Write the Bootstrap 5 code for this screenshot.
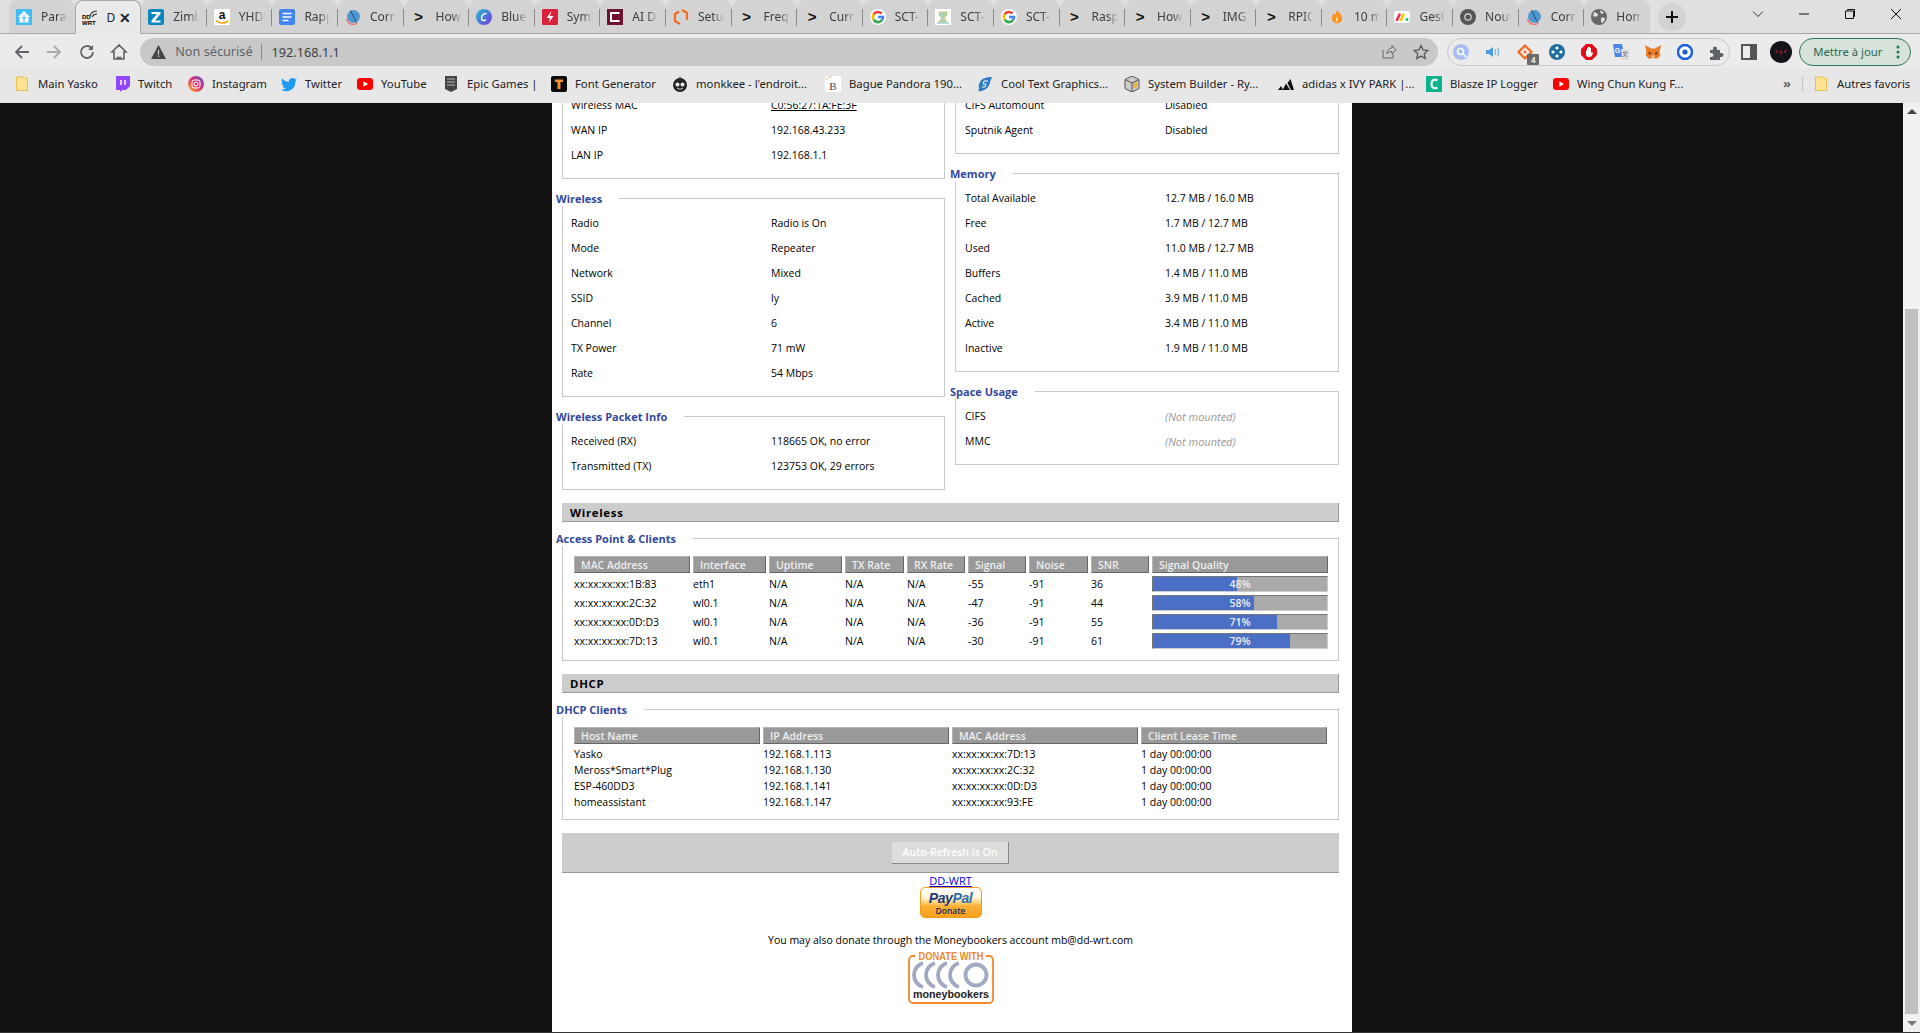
<!DOCTYPE html>
<html lang="fr">
<head>
<meta charset="utf-8">
<title>DD-WRT</title>
<link href="https://cdn.jsdelivr.net/npm/bootstrap@5.3.0/dist/css/bootstrap.min.css" rel="stylesheet">
<style>
html,body{height:100%;}
body{background:#111;font-family:"Noto Sans",sans-serif;border-bottom:1px solid #333;}
.tabstrip{height:33px;background:#e0e0e0;padding-left:9px;border-bottom:1px solid #a9a9a9;flex:none;box-sizing:content-box;}
.tabrow{width:1641px;}
.gtab{flex:1 1 0;min-width:0;height:33px;background:#d3d3d3;border-radius:8px 8px 0 0;padding-left:7px;font-size:12px;color:#3c4043;position:relative;}
.gtab.sep::after{content:"";position:absolute;right:0;top:9px;height:17px;width:1px;background:#8a8a8a;}
.gtab.act{background:#e9e9e9;border:1px solid #a9a9a9;border-bottom:0;height:34px;padding-left:6px;z-index:2;color:#222;}
.fav{width:16px;height:16px;flex:none;display:block;}
.ttl{margin-left:9px;width:26px;white-space:nowrap;overflow:hidden;-webkit-mask-image:linear-gradient(90deg,#000 60%,transparent);mask-image:linear-gradient(90deg,#000 60%,transparent);}
.act .ttl{margin-left:9px;width:11px;-webkit-mask-image:none;mask-image:none;}
.chev{width:16px;height:16px;flex:none;font-weight:700;font-size:15px;line-height:16px;color:#111;text-align:center;font-family:"Liberation Sans",sans-serif;}
.tabx{margin-left:auto;margin-right:9px;font-size:14px;font-weight:700;line-height:1;}
.plus{width:28px;height:28px;border-radius:50%;background:#d3d3d3;margin-left:8px;margin-top:3px;flex:none;}
.winctl{width:234px;height:28px;padding-right:18px;padding-left:66px;flex:none;}
.toolbar{height:34px;padding-top:2px;background:#ebebeb;flex:none;padding-left:13px;}
.tb-btn{width:18px;height:18px;flex:none;margin-right:14.3px;display:block;}
.omni{width:1298px;height:28px;background:#c8c8c8;border-radius:14px;font-size:12.7px;color:#5f6368;margin-left:-2px;padding-left:11px;padding-right:9px;flex:none;}
.omni .url{color:#3c4043;margin-left:8px;border-left:1px solid #888;padding-left:10px;line-height:16px;}
.omni .nonsec{margin-left:9px;}
.extpill{width:283px;height:28px;border:1px solid #c9c9c9;border-radius:14px;margin-left:9px;padding:0 4px 0 5px;background:#ebebeb;position:relative;flex:none;}
.xbadge{position:absolute;left:79px;top:15px;width:12px;height:11px;background:#6b6b6b;color:#eee;font-size:8px;line-height:11px;text-align:center;border-radius:1px;font-weight:700;}
.sidep{margin-left:11px;}
.avatar{margin-left:13px;width:22px;height:22px;flex:none;}
.updpill{width:112px;height:28px;margin-left:7px;border:1px solid #2a7a50;border-radius:14px;background:#d6e2da;color:#2a6a50;font-size:11.3px;padding-left:13px;padding-right:10px;flex:none;}
.bmbar{height:35px;padding-bottom:3px;background:#e7e7e7;flex:none;display:grid;grid-template-columns:100px 74px 93px 76px 86px 108px 121px 153px 152px 147px 154px 148px 127px 230px 19px 11px auto;padding-left:14px;align-items:center;font-size:11.3px;color:#222;}
.bmk{display:flex;align-items:center;gap:0;white-space:nowrap;}
.bmk svg{width:16px;height:16px;flex:none;margin-right:8px;}
.bmsep{border-left:1px solid #c4c4c4;height:16px;width:1px;}
.more{font-size:13px;font-weight:700;color:#666;}
.vp{min-height:0;flex:1 1 0;}
.canvasbg{flex:1 1 0;min-width:0;}
.ddpage{width:800px;background:#fff;overflow:hidden;margin-left:552px;padding:0 13px 0 10px;font-family:"Open Sans",sans-serif;font-size:10.5px;color:#000;}
.vscroll{width:17px;background:#f1f1f1;flex:none;position:relative;}
.vthumb{position:absolute;left:2px;right:2px;top:206px;bottom:18px;background:#c0c0c0;}
.arrup,.arrdn{position:absolute;left:4px;width:0;height:0;border-left:5px solid transparent;border-right:5px solid transparent;}
.arrup{top:6px;border-bottom:5px solid #444;}
.arrdn{bottom:6px;border-top:5px solid #777;}
.cols{margin-top:-10px;}
.colL{width:383px;}
.colR{width:384px;}
.fbox{position:relative;border:1px solid #c8c8c8;margin:0 0 19px;padding:12px 8px 10px 8px;min-width:0;}
.colL .fbox:last-child{margin-bottom:0;}
.fbox.cut{border-top:0;padding-top:0;}
.colR .fbox{padding-left:9px;}
.fbox>legend{position:absolute;float:none;width:auto;left:-7px;top:-7px;margin:0;padding:0 17px 0 0;background:#fff;color:#33489c;font-size:11px;line-height:14px;font-weight:700;font-family:"Open Sans",sans-serif;}
.colR .fbox>legend{left:-6px;}
.kv{display:flex;height:25px;align-items:center;line-height:25px;}
.kv>span:first-child{width:200px;flex:none;}
.valu{text-decoration:underline;}
.nm{font-style:italic;color:#999;font-size:11px;line-height:24px;}
.secbar{height:19px;background:#ccc;border-bottom:1px solid #999;border-right:1px solid #999;font-weight:700;font-size:11.4px;letter-spacing:.7px;line-height:20px;padding-left:8px;color:#000;margin-top:13px;}
.fbox.tbx{margin-top:16px;margin-bottom:0;padding:17px 8px 11px 8px;}
.fbox.tbx.dh{padding-bottom:8px;}
.dtab{border-collapse:separate;border-spacing:3px 0;table-layout:fixed;width:760px;}
.dtab th{height:17px;background:#999;color:#eee;font-weight:600;padding:0 0 0 6px;border-top:1px solid #b5b5b5;border-left:1px solid #b5b5b5;border-bottom:1px solid #666;border-right:1px solid #666;line-height:14px;white-space:nowrap;font-size:10.5px;}
.dtab td{padding:0;white-space:nowrap;}
.aptab td{height:19px;padding-top:3px;line-height:16px;}
.dhtab td{height:16px;}
.dhtab tbody tr:first-child td{height:19px;padding-top:3px;}
.c-mac{width:116px;}.c-if{width:73px;}.c-up{width:73px;}.c-tx{width:59px;}.c-rx{width:58px;}.c-sg{width:58px;}.c-no{width:59px;}.c-sn{width:58px;}.c-sq{width:176px;}
.c-dh{width:186px;}
.dhtab{width:759px;}
.qmeter{height:16px;background:#aaa;position:relative;border-top:1px solid #777;border-left:1px solid #777;border-bottom:1px solid #ccc;border-right:1px solid #ccc;color:#eee;text-align:center;line-height:14px;font-weight:600;}
.qfill{position:absolute;left:0;top:0;bottom:0;background:#4a6fc5;}
.qtxt{position:relative;}
.btnbar{height:40px;background:#ccc;border-bottom:1px solid #999;margin-top:13px;padding-top:1px;}
.arbtn{width:117px;height:22px;background:#ddd;color:#fff;border:0;border-bottom:1px solid #888;border-right:1px solid #888;font-weight:600;font-size:10.5px;padding:0;font-family:"Open Sans",sans-serif;}
.foot{height:159px;line-height:13px;padding-top:1px;}
.foot a{color:#00e;font-size:11px;line-height:13px;display:block;}
.ppbtn{width:62px;height:31px;border:1px solid #f59a1a;border-radius:5px;background:linear-gradient(#fff 0,#fff2d6 35%,#ffd27a 50%,#fbb035 62%,#f8a01c 100%);line-height:1;flex:none;}
.ppname{font:italic 700 14px "Liberation Sans",sans-serif;color:#1c3b78;margin-top:2px;letter-spacing:-.4px;}
.ppname b{color:#2f6fb5;}
.ppdon{font-size:8.5px;color:#12275e;margin-top:1px;font-weight:600;}
.donate{margin-top:16px;height:13px;}
.mbk{width:86px;height:52px;display:block;margin-top:5px;flex:none;}
</style>
</head>
<body class="d-flex flex-column overflow-hidden">
<svg width="0" height="0" class="position-absolute">
<defs>
<symbol id="g" viewBox="0 0 16 16"><circle cx="8" cy="8" r="8" fill="#fff"/><g fill="none" stroke-width="2.600"><path d="M3.700 5.200A5 5 0 0 1 11.500 4.500" stroke="#ea4335"/><path d="M3.700 5.200A5 5 0 0 0 3.700 10.800" stroke="#fbbc05"/><path d="M3.700 10.800A5 5 0 0 0 12 11" stroke="#34a853"/><path d="M12 11A5 5 0 0 0 13 8H8" stroke="#4285f4"/></g></symbol>
<symbol id="ball" viewBox="0 0 16 16"><path d="M1.500 10a7 7 0 0 0 11 4" fill="none" stroke="#e87a7a" stroke-width="1.500"/><circle cx="8.500" cy="7.500" r="6.500" fill="#4e97cf"/><path d="M5.500 1.500l6 12" stroke="#1f4e79" stroke-width="1"/></symbol>
<symbol id="folder" viewBox="0 0 16 16"><path d="M2.500 1h7l1 1h3v12.500h-11z" fill="#fde293" stroke="#e8c04f"/></symbol>
<symbol id="yt" viewBox="0 0 16 16"><rect y="2" width="16" height="12" rx="3" fill="#f00"/><path d="M6.400 5.300 11 8l-4.600 2.700z" fill="#fff"/></symbol>
</defs>
</svg>

<div class="tabstrip d-flex">
<div class="tabrow d-flex">
<div class="gtab d-flex align-items-center"><svg class="fav" viewBox="0 0 16 16"><rect width="16" height="16" rx="1" fill="#41bdf5"/><path d="M8 2l6 6h-1.500v5.500h-9V8H2z" fill="#fff"/><path d="M8 6v7M6 8l2 2 2-2" stroke="#41bdf5" fill="none"/></svg><span class="ttl">Para</span></div>
<div class="gtab act d-flex align-items-center"><svg class="fav" viewBox="0 0 16 16"><text x="0" y="9" font-family="Liberation Sans" font-weight="700" font-size="6">DD</text><text x="0" y="15" font-family="Liberation Sans" font-weight="700" font-size="6">WRT</text><path d="M8 6c1-3 3-5 7-5M10 7c1-2 2-3 5-3" stroke="#333" fill="none" stroke-width="1.200"/></svg><span class="ttl">D</span><span class="tabx">✕</span></div>
<div class="gtab sep d-flex align-items-center"><svg class="fav" viewBox="0 0 16 16"><rect width="16" height="16" rx="2" fill="#0a85c0"/><path d="M3.500 3h9v2L7 11.500h5.500V13.500h-9v-2L9 5H3.500z" fill="#fff"/></svg><span class="ttl">Zimb</span></div>
<div class="gtab sep d-flex align-items-center"><svg class="fav" viewBox="0 0 16 16"><rect width="16" height="16" rx="1" fill="#fff"/><text x="8" y="10" text-anchor="middle" font-family="Liberation Sans" font-weight="700" font-size="12" fill="#111">a</text><path d="M1.500 11.500c4 3 9 3 13 .5" stroke="#f90" stroke-width="1.500" fill="none"/></svg><span class="ttl">YHD(</span></div>
<div class="gtab sep d-flex align-items-center"><svg class="fav" viewBox="0 0 16 16"><rect width="16" height="16" rx="2" fill="#4285f4"/><path d="M3.500 4.500h9M3.500 8h9M3.500 11.500h6" stroke="#fff" stroke-width="1.600"/></svg><span class="ttl">Rapp</span></div>
<div class="gtab sep d-flex align-items-center"><svg class="fav"><use href="#ball"/></svg><span class="ttl">Corr</span></div>
<div class="gtab sep d-flex align-items-center"><span class="chev">&gt;</span><span class="ttl">How</span></div>
<div class="gtab sep d-flex align-items-center"><svg class="fav" viewBox="0 0 16 16"><defs><linearGradient id="cv" x1="0" y1="0" x2="1" y2="1"><stop offset="0" stop-color="#1fc4d8"/><stop offset="1" stop-color="#7a2ee0"/></linearGradient></defs><circle cx="8" cy="8" r="8" fill="url(#cv)"/><path d="M10.500 5c-1-1.500-5 .5-5 4s3 3 4.500 1.500" stroke="#fff" stroke-width="1.500" fill="none"/></svg><span class="ttl">Blue</span></div>
<div class="gtab sep d-flex align-items-center"><svg class="fav" viewBox="0 0 16 16"><rect width="16" height="16" rx="1" fill="#d8213b"/><path d="M9.500 2 4.500 9H8l-1.500 5 5-7H8z" fill="#fff"/></svg><span class="ttl">Symb</span></div>
<div class="gtab sep d-flex align-items-center"><svg class="fav" viewBox="0 0 16 16"><rect width="16" height="16" fill="#6f1230"/><path d="M12.500 4H4v8h8.500" stroke="#fff" stroke-width="2" fill="none"/></svg><span class="ttl">AI De</span></div>
<div class="gtab sep d-flex align-items-center"><svg class="fav" viewBox="0 0 16 16"><path d="M9 1l5 2.800v7M7 15l-5-2.800V5l4-2.300" stroke="#f26a21" stroke-width="2.200" fill="none"/></svg><span class="ttl">Setup</span></div>
<div class="gtab sep d-flex align-items-center"><span class="chev">&gt;</span><span class="ttl">Freq</span></div>
<div class="gtab sep d-flex align-items-center"><span class="chev">&gt;</span><span class="ttl">Curr</span></div>
<div class="gtab sep d-flex align-items-center"><svg class="fav"><use href="#g"/></svg><span class="ttl">SCT-</span></div>
<div class="gtab sep d-flex align-items-center"><svg class="fav" viewBox="0 0 16 16"><rect width="16" height="16" fill="#fff"/><path d="M4 3h8v3l-3 3 3 4H4l3-4-3-3z" fill="#a8d5ba" stroke="#d9b84a" stroke-width=".7"/><path d="M2 14h12" stroke="#6fb7c9"/></svg><span class="ttl">SCT-</span></div>
<div class="gtab sep d-flex align-items-center"><svg class="fav"><use href="#g"/></svg><span class="ttl">SCT-</span></div>
<div class="gtab sep d-flex align-items-center"><span class="chev">&gt;</span><span class="ttl">Rasp</span></div>
<div class="gtab sep d-flex align-items-center"><span class="chev">&gt;</span><span class="ttl">How</span></div>
<div class="gtab sep d-flex align-items-center"><span class="chev">&gt;</span><span class="ttl">IMG_</span></div>
<div class="gtab sep d-flex align-items-center"><span class="chev">&gt;</span><span class="ttl">RPIC</span></div>
<div class="gtab sep d-flex align-items-center"><svg class="fav" viewBox="0 0 16 16"><path d="M8 1c1 2 5 4 5 8.500A5 5 0 0 1 3 9.500C3 7 4 6 5 4c.5 1 1 1.500 1.500 2C7 4 7.500 3 8 1z" fill="#f5921e"/><path d="M8 7c0 2-2 3-1 6 2 .5 3-2 1-6z" fill="#fddb92"/></svg><span class="ttl">10 m</span></div>
<div class="gtab sep d-flex align-items-center"><svg class="fav" viewBox="0 0 16 16"><rect y="2" width="16" height="12" rx="3" fill="#fff"/><path d="M3 11l2.500-5.500" stroke="#f62b54" stroke-width="2.600" stroke-linecap="round"/><path d="M7 11l2.500-5.500" stroke="#fc0" stroke-width="2.600" stroke-linecap="round"/><circle cx="13" cy="10.500" r="1.500" fill="#00ca72"/></svg><span class="ttl">Gest</span></div>
<div class="gtab sep d-flex align-items-center"><svg class="fav" viewBox="0 0 16 16"><circle cx="8" cy="8" r="8" fill="#555"/><circle cx="8" cy="8" r="3.800" fill="#ddd"/><circle cx="8" cy="8" r="2.600" fill="#555"/></svg><span class="ttl">Nouv</span></div>
<div class="gtab sep d-flex align-items-center"><svg class="fav"><use href="#ball"/></svg><span class="ttl">Corr</span></div>
<div class="gtab d-flex align-items-center"><svg class="fav" viewBox="0 0 16 16"><circle cx="8" cy="8" r="8" fill="#666"/><path d="M3 3c2 1 4 1 4 3S3 8 2 7M10 9c2-1 4 0 4 1s-2 4-3 4-1-3-1-5zM9 1c1 1 3 1 4 3L10 5z" fill="#ddd"/></svg><span class="ttl">Hom</span></div>
</div>
<div class="plus d-flex align-items-center justify-content-center"><svg width="14" height="14" viewBox="0 0 14 14"><path d="M7 1v12M1 7h12" stroke="#111" stroke-width="2"/></svg></div>
<div class="winctl d-flex align-items-center justify-content-between">
<svg width="12" height="12" viewBox="0 0 12 12"><path d="M1 3.500l5 5 5-5" stroke="#333" fill="none"/></svg>
<svg width="12" height="12" viewBox="0 0 12 12"><path d="M1 6h10" stroke="#111"/></svg>
<svg width="12" height="12" viewBox="0 0 12 12"><path d="M3.500 2.500V1.500h7v7h-1M1.500 3h8v7.500h-8z" stroke="#111" fill="none"/></svg>
<svg width="12" height="12" viewBox="0 0 12 12"><path d="M1 1l10 10M11 1L1 11" stroke="#111"/></svg>
</div>
</div>

<div class="toolbar d-flex align-items-center">
<svg class="tb-btn" viewBox="0 0 18 18"><path d="M16 9H3M9 3 3 9l6 6" stroke="#5f6368" stroke-width="1.800" fill="none"/></svg>
<svg class="tb-btn" viewBox="0 0 18 18"><path d="M2 9h13M9 3l6 6-6 6" stroke="#aaa" stroke-width="1.800" fill="none"/></svg>
<svg class="tb-btn" viewBox="0 0 18 18"><path d="M15 9a6 6 0 1 1-1.800-4.300" stroke="#5f6368" stroke-width="1.800" fill="none"/><path d="M15 2v5h-5z" fill="#5f6368"/></svg>
<svg class="tb-btn" viewBox="0 0 18 18"><path d="M9 2 2 9h2v7h10V9h2zM6.500 14.500h5" stroke="#5f6368" stroke-width="1.600" fill="none"/></svg>
<div class="omni d-flex align-items-center">
<svg width="15" height="14" viewBox="0 0 15 14"><path d="M7.500 0 15 14H0z" fill="#444"/><path d="M7.500 5v4.500M7.500 10.500v1.500" stroke="#c8c8c8" stroke-width="1.300"/></svg>
<span class="nonsec">Non sécurisé</span><span class="url">192.168.1.1</span>
<svg class="ms-auto me-3" width="16" height="16" viewBox="0 0 16 16"><path d="M2 6v8h10v-4M6 10c0-4 3-6 5-6V1.500L15 6l-4 4V7.500C9 7.500 7 8 6 10z" stroke="#666" fill="none"/></svg>
<svg width="16" height="16" viewBox="0 0 16 16"><path d="M8 1.500l2 4.500 4.800.5-3.600 3.200 1 4.800L8 12.100l-4.200 2.400 1-4.800L1.200 6.500 6 6z" stroke="#555" stroke-width="1.300" fill="none"/></svg>
</div>
<div class="extpill d-flex align-items-center justify-content-between">
<svg class="fav" viewBox="0 0 16 16"><circle cx="8" cy="8" r="8" fill="#a9bdf5"/><circle cx="7.500" cy="7.500" r="3" fill="none" stroke="#fff" stroke-width="1.600"/><path d="M10 10l3 3" stroke="#fff" stroke-width="1.600"/></svg>
<svg class="fav" viewBox="0 0 16 16"><path d="M1 6h3l4-3v10L4 10H1z" fill="#4d9be0"/><path d="M10 5c1 2 1 4 0 6M12.500 3.500c1.500 3 1.500 6 0 9" stroke="#7bb6ea" fill="none" stroke-width="1.300"/></svg>
<svg class="fav" viewBox="0 0 16 16"><path d="M8 1.500 14.500 8 8 14.500 1.500 8z" fill="none" stroke="#f26a21" stroke-width="2.400" stroke-linejoin="round"/><circle cx="8" cy="8" r="1.400" fill="#f26a21"/></svg>
<svg class="fav" viewBox="0 0 16 16"><circle cx="8" cy="8" r="8" fill="#1f6e9c"/><circle cx="8" cy="4" r="1.600" fill="#fff"/><circle cx="8" cy="12" r="1.600" fill="#fff"/><circle cx="4" cy="8" r="1.600" fill="#fff"/><circle cx="12" cy="8" r="1.600" fill="#fff"/></svg>
<svg class="fav" viewBox="0 0 16 16"><path d="M5 0h6l5 5v6l-5 5H5l-5-5V5z" fill="#e0101b"/><path d="M5 6v4c0 2 1 3 3 3s3-1 4-4l-1-1-1 1V4H9v3V3H8v4V3H7v4V4H6v3z" fill="#fff"/></svg>
<svg class="fav" viewBox="0 0 16 16"><path d="M0 0h9l3 13H2z" fill="#4a86e8"/><text x="4.500" y="9" font-size="7" font-weight="700" fill="#fff" text-anchor="middle" font-family="Liberation Sans">G</text><path d="M8 5h8v11H9z" fill="#ddd"/><text x="12" y="12" font-size="6" fill="#666" text-anchor="middle" font-family="Noto Sans CJK SC">文</text></svg>
<svg class="fav" viewBox="0 0 16 16"><path d="M0 1l6 3.500h4L16 1l-1.500 7 1 3-3 3.500H9.500L8 13l-1.500 1.500H3.500L.5 11l1-3z" fill="#ea7a26"/><path d="M3 8l3 1-1 2zM13 8l-3 1 1 2z" fill="#3a2a22"/><path d="M6 13h4l-2-2z" fill="#f6d7b8"/></svg>
<svg class="fav" viewBox="0 0 16 16"><circle cx="8" cy="8" r="7" fill="#fff" stroke="#1a5fe0" stroke-width="2.400"/><circle cx="8" cy="8" r="2.600" fill="#1a5fe0"/></svg>
<svg class="fav" viewBox="0 0 16 16"><path d="M1 6h3V4.500a2 2 0 0 1 4 0V6h3v3h1.500a2 2 0 0 1 0 4H11v3H1v-3h1.500a2 2 0 0 0 0-4H1z" fill="#5f6368"/></svg>
<span class="xbadge">4</span>
</div>
<svg class="fav sidep" viewBox="0 0 16 16"><rect x="1" y="1" width="14" height="14" fill="none" stroke="#555" stroke-width="2"/><rect x="9" y="1" width="6" height="14" fill="#555"/></svg>
<svg class="avatar" viewBox="0 0 22 22"><circle cx="11" cy="11" r="11" fill="#15121a"/><path d="M11 8l1 3-1 4-1-4zM5 8l4 3-3 1zM17 8l-4 3 3 1z" fill="#8c1c28"/></svg>
<div class="updpill d-flex align-items-center justify-content-between"><span>Mettre à jour</span><svg width="4" height="14" viewBox="0 0 4 14"><circle cx="2" cy="2" r="1.500" fill="#1e7a48"/><circle cx="2" cy="7" r="1.500" fill="#1e7a48"/><circle cx="2" cy="12" r="1.500" fill="#1e7a48"/></svg></div>
</div>

<div class="bmbar">
<span class="bmk"><svg><use href="#folder"/></svg>Main Yasko</span>
<span class="bmk"><svg viewBox="0 0 16 16"><path d="M2 0h14v10l-4 4H8.500L6 16v-2H2z" fill="#9146ff"/><path d="M7 4v5M11 4v5" stroke="#fff" stroke-width="1.500"/></svg>Twitch</span>
<span class="bmk"><svg viewBox="0 0 16 16"><defs><linearGradient id="ig" x1="0" y1="1" x2="1" y2="0"><stop offset="0" stop-color="#fdc830"/><stop offset=".5" stop-color="#e1306c"/><stop offset="1" stop-color="#5b51d8"/></linearGradient></defs><circle cx="8" cy="8" r="8" fill="url(#ig)"/><rect x="4" y="4" width="8" height="8" rx="2" fill="none" stroke="#fff"/><circle cx="8" cy="8" r="2" fill="none" stroke="#fff"/></svg>Instagram</span>
<span class="bmk"><svg viewBox="0 0 16 16"><path d="M16 3.500c-.6.300-1.200.4-1.900.5.700-.4 1.200-1 1.400-1.800-.6.400-1.300.6-2 .8a3.300 3.300 0 0 0-5.600 3C5.200 5.900 2.800 4.600 1.100 2.600.2 4.100.7 6 2.100 7c-.5 0-1-.2-1.500-.4 0 1.600 1.100 3 2.600 3.300-.5.100-1 .2-1.500.1.400 1.300 1.600 2.200 3 2.300A6.600 6.600 0 0 1 0 13.600a9.300 9.300 0 0 0 14.400-8.300c.6-.5 1.200-1.100 1.600-1.800z" fill="#1d9bf0"/></svg>Twitter</span>
<span class="bmk"><svg><use href="#yt"/></svg>YouTube</span>
<span class="bmk"><svg viewBox="0 0 16 16"><path d="M2 0h12v13l-6 3-6-3z" fill="#444"/><path d="M4 3h8M4 6h8M4 9h8" stroke="#bbb"/></svg>Epic Games |</span>
<span class="bmk"><svg viewBox="0 0 16 16"><rect width="16" height="16" rx="2" fill="#0a0a0a"/><path d="M4 3.500h8v2.500H9.500v7h-3V6H4z" fill="#f5922a"/></svg>Font Generator</span>
<span class="bmk"><svg viewBox="0 0 16 16"><circle cx="8" cy="9" r="7" fill="#222"/><path d="M8 0l1 3H7z" fill="#222"/><circle cx="5.500" cy="8.500" r="2" fill="#eee"/><circle cx="10.500" cy="8.500" r="2" fill="#eee"/><path d="M5 12c2 1.500 4 1.500 6 0" stroke="#eee"/></svg>monkkee - l'endroit...</span>
<span class="bmk"><svg viewBox="0 0 16 16"><rect width="16" height="16" fill="#fff"/><path d="M1 4c2-3 4-3 6-4" stroke="#d8c98c" fill="none"/><text x="8" y="14" font-size="11" text-anchor="middle" font-family="Liberation Serif" fill="#445">B</text></svg>Bague Pandora 190...</span>
<span class="bmk"><svg viewBox="0 0 16 16"><path d="M3 6c1-3 6-5 12-5l-2 5c0 5-6 10-12 9 1-1 1-2 1-3-1-2 0-4 1-6z" fill="#2f7cc2"/><path d="M11 5H7L6 8h3l-1 3H5" stroke="#fff" fill="none"/></svg>Cool Text Graphics...</span>
<span class="bmk"><svg viewBox="0 0 16 16"><path d="M8 0l7 3.500v9L8 16l-7-3.500v-9z" fill="#ccc" stroke="#555"/><path d="M8 7v9M1 3.500 8 7l7-3.500" stroke="#555" fill="none"/><path d="M9 8l4-2v5l-4 2z" fill="#e8b33c"/></svg>System Builder - Ry...</span>
<span class="bmk"><svg viewBox="0 0 16 16"><path d="M0 14l3-4 2 4zM4.500 14 8 7.500l4 6.500zM9.500 7l3-4 3.500 11h-3z" fill="#111"/></svg>adidas x IVY PARK |...</span>
<span class="bmk"><svg viewBox="0 0 16 16"><rect width="16" height="16" fill="#0bb38c"/><path d="M11.500 4.500c-1-1-6-2-6 3.500s5 4.500 6 3.500" stroke="#fff" stroke-width="2" fill="none"/></svg>Blasze IP Logger</span>
<span class="bmk"><svg><use href="#yt"/></svg>Wing Chun Kung F...</span>
<span class="more">»</span>
<span class="bmsep"></span>
<span class="bmk"><svg><use href="#folder"/></svg>Autres favoris</span>
</div>

<div class="vp d-flex">
<div class="canvasbg overflow-hidden">
<main class="ddpage">
<div class="cols d-flex justify-content-between">
<div class="colL">
<fieldset class="fbox cut">
<div class="kv"><span>Wireless MAC</span><span class="valu">C0:56:27:1A:FE:3F</span></div>
<div class="kv"><span>WAN IP</span><span>192.168.43.233</span></div>
<div class="kv"><span>LAN IP</span><span>192.168.1.1</span></div>
</fieldset>
<fieldset class="fbox"><legend>Wireless</legend>
<div class="kv"><span>Radio</span><span>Radio is On</span></div>
<div class="kv"><span>Mode</span><span>Repeater</span></div>
<div class="kv"><span>Network</span><span>Mixed</span></div>
<div class="kv"><span>SSID</span><span>ly</span></div>
<div class="kv"><span>Channel</span><span>6</span></div>
<div class="kv"><span>TX Power</span><span>71 mW</span></div>
<div class="kv"><span>Rate</span><span>54 Mbps</span></div>
</fieldset>
<fieldset class="fbox"><legend>Wireless Packet Info</legend>
<div class="kv"><span>Received (RX)</span><span>118665 OK, no error</span></div>
<div class="kv"><span>Transmitted (TX)</span><span>123753 OK, 29 errors</span></div>
</fieldset>
</div>
<div class="colR">
<fieldset class="fbox cut">
<div class="kv"><span>CIFS Automount</span><span>Disabled</span></div>
<div class="kv"><span>Sputnik Agent</span><span>Disabled</span></div>
</fieldset>
<fieldset class="fbox"><legend>Memory</legend>
<div class="kv"><span>Total Available</span><span>12.7 MB / 16.0 MB</span></div>
<div class="kv"><span>Free</span><span>1.7 MB / 12.7 MB</span></div>
<div class="kv"><span>Used</span><span>11.0 MB / 12.7 MB</span></div>
<div class="kv"><span>Buffers</span><span>1.4 MB / 11.0 MB</span></div>
<div class="kv"><span>Cached</span><span>3.9 MB / 11.0 MB</span></div>
<div class="kv"><span>Active</span><span>3.4 MB / 11.0 MB</span></div>
<div class="kv"><span>Inactive</span><span>1.9 MB / 11.0 MB</span></div>
</fieldset>
<fieldset class="fbox"><legend>Space Usage</legend>
<div class="kv"><span>CIFS</span><span class="nm">(Not mounted)</span></div>
<div class="kv"><span>MMC</span><span class="nm">(Not mounted)</span></div>
</fieldset>
</div>
</div>

<div class="secbar">Wireless</div>
<fieldset class="fbox tbx"><legend>Access Point &amp; Clients</legend>
<table class="dtab aptab">
<colgroup><col class="c-mac"><col class="c-if"><col class="c-up"><col class="c-tx"><col class="c-rx"><col class="c-sg"><col class="c-no"><col class="c-sn"><col class="c-sq"></colgroup>
<thead><tr><th>MAC Address</th><th>Interface</th><th>Uptime</th><th>TX Rate</th><th>RX Rate</th><th>Signal</th><th>Noise</th><th>SNR</th><th>Signal Quality</th></tr></thead>
<tbody>
<tr><td>xx:xx:xx:xx:1B:83</td><td>eth1</td><td>N/A</td><td>N/A</td><td>N/A</td><td>-55</td><td>-91</td><td>36</td><td><div class="qmeter"><div class="qfill" style="width:48%"></div><span class="qtxt">48%</span></div></td></tr>
<tr><td>xx:xx:xx:xx:2C:32</td><td>wl0.1</td><td>N/A</td><td>N/A</td><td>N/A</td><td>-47</td><td>-91</td><td>44</td><td><div class="qmeter"><div class="qfill" style="width:58%"></div><span class="qtxt">58%</span></div></td></tr>
<tr><td>xx:xx:xx:xx:0D:D3</td><td>wl0.1</td><td>N/A</td><td>N/A</td><td>N/A</td><td>-36</td><td>-91</td><td>55</td><td><div class="qmeter"><div class="qfill" style="width:71%"></div><span class="qtxt">71%</span></div></td></tr>
<tr><td>xx:xx:xx:xx:7D:13</td><td>wl0.1</td><td>N/A</td><td>N/A</td><td>N/A</td><td>-30</td><td>-91</td><td>61</td><td><div class="qmeter"><div class="qfill" style="width:79%"></div><span class="qtxt">79%</span></div></td></tr>
</tbody>
</table>
</fieldset>

<div class="secbar">DHCP</div>
<fieldset class="fbox tbx dh"><legend>DHCP Clients</legend>
<table class="dtab dhtab">
<colgroup><col class="c-dh"><col class="c-dh"><col class="c-dh"><col class="c-dh"></colgroup>
<thead><tr><th>Host Name</th><th>IP Address</th><th>MAC Address</th><th>Client Lease Time</th></tr></thead>
<tbody>
<tr><td>Yasko</td><td>192.168.1.113</td><td>xx:xx:xx:xx:7D:13</td><td>1 day 00:00:00</td></tr>
<tr><td>Meross*Smart*Plug</td><td>192.168.1.130</td><td>xx:xx:xx:xx:2C:32</td><td>1 day 00:00:00</td></tr>
<tr><td>ESP-460DD3</td><td>192.168.1.141</td><td>xx:xx:xx:xx:0D:D3</td><td>1 day 00:00:00</td></tr>
<tr><td>homeassistant</td><td>192.168.1.147</td><td>xx:xx:xx:xx:93:FE</td><td>1 day 00:00:00</td></tr>
</tbody>
</table>
</fieldset>

<div class="btnbar d-flex align-items-center justify-content-center"><button type="button" class="arbtn">Auto-Refresh is On</button></div>

<div class="foot d-flex flex-column align-items-center text-center">
<a href="#">DD-WRT</a>
<div class="ppbtn"><div class="ppname">Pay<b>Pal</b></div><div class="ppdon">Donate</div></div>
<div class="donate">You may also donate through the Moneybookers account mb@dd-wrt.com</div>
<svg class="mbk" viewBox="0 0 86 52"><path d="M7 4H5a4 4 0 0 0-4 4v39a4 4 0 0 0 4 4h76a4 4 0 0 0 4-4V8a4 4 0 0 0-4-4h-3" fill="none" stroke="#f28a2c" stroke-width="1.800"/><text x="43" y="8" text-anchor="middle" font-family="Liberation Sans" font-weight="700" font-size="11" textLength="65" lengthAdjust="spacingAndGlyphs" fill="#f28a2c">DONATE WITH</text><g fill="none" stroke="#a0a8c2" stroke-width="3.800"><path d="M15 11a12.500 12.500 0 0 0 0 24"/><path d="M27 11a12.500 12.500 0 0 0 0 24"/><path d="M39 11a12.500 12.500 0 0 0 0 24"/><path d="M51 11a12.500 12.500 0 0 0 0 24"/><circle cx="68" cy="23" r="10.500"/></g><text x="43" y="45.500" text-anchor="middle" font-family="Liberation Sans" font-weight="700" font-size="10" textLength="76" lengthAdjust="spacingAndGlyphs" fill="#222">moneybookers</text></svg>
</div>
</main>
</div>
<div class="vscroll"><span class="arrup"></span><span class="vthumb"></span><span class="arrdn"></span></div>
</div>
</body>
</html>
